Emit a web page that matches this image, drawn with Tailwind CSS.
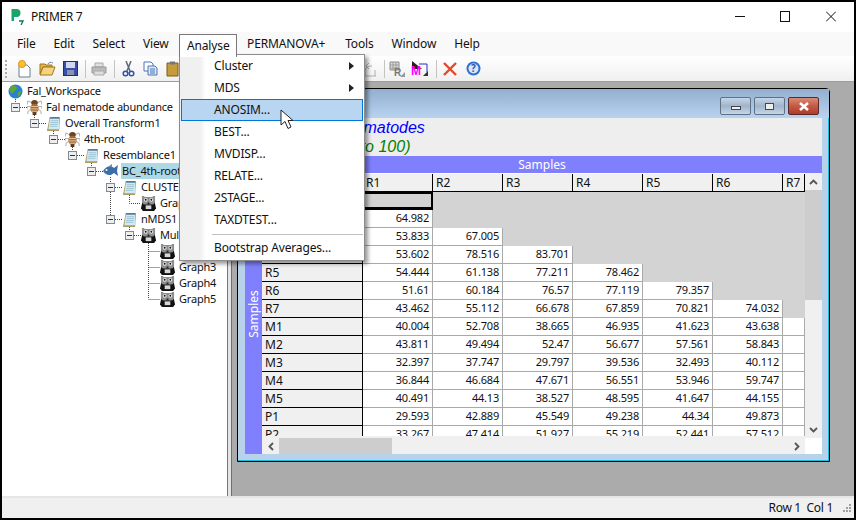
<!DOCTYPE html>
<html lang="en">

<head>
    <meta charset="UTF-8">
    <title>PRIMER 7</title>
    <script src="https://cdn.jsdelivr.net/npm/@tailwindcss/browser@4"></script>
</head>

<body class="bg-black overflow-hidden">
    <!-- shared tree icons -->
    <svg width="0" height="0" class="absolute">
        <symbol id="bug" viewBox="0 0 16 16">
            <path d="M5 3 1 1 0 5M4 7H0v3M4 10l-3 2v3M11 3l4-2 1 4M12 7h4v3M12 10l3 2v3" stroke="#a8a8a8" fill="none"/>
            <ellipse cx="8" cy="3" rx="3.500" ry="3" fill="#6e4420"/>
            <ellipse cx="8" cy="9" rx="4.500" ry="5" fill="#a5683a"/>
            <path d="M4 7h8M3.500 9.500h9M4.500 12h7" stroke="#e8cfa0"/>
            <rect x="6" y="13" width="4" height="3" fill="#5a3a1c"/>
        </symbol>
        <symbol id="note" viewBox="0 0 16 16">
            <path d="M4 1h11l-1 15H1z" fill="#b39a62"/>
            <path d="M4.500 1H14v13H2.500z" fill="#cfeaf2"/>
            <path d="M4.500 1H14v2H4z" fill="#5c7a96"/>
            <path d="M5 5h8M5 7h8M4.500 9h8M4 11h8" stroke="#9cc4d4"/>
        </symbol>
        <symbol id="owl" viewBox="0 0 16 16">
            <path d="M1.500 6 0 13l2 3h12l2-3-1.500-7z" fill="#111"/>
            <path d="M1 0h2l1 1h8l1-1h2v7l-2 2H3L1 7z" fill="#8e8e8e"/>
            <circle cx="5" cy="4" r="2" fill="#eee"/>
            <circle cx="11" cy="4" r="2" fill="#eee"/>
            <circle cx="5" cy="4" r="1" fill="#111"/>
            <circle cx="11" cy="4" r="1" fill="#111"/>
            <path d="M5 10h6v4H5z" fill="#d8d8d8"/>
            <path d="M7 7h2v2H7z" fill="#222"/>
        </symbol>
    </svg>

    <div class="relative w-[852px] h-[516px] m-[2px] flex flex-col font-['Noto_Sans',sans-serif] text-[12px] text-[#111] bg-white">
        <!-- Title bar -->
        <div class="h-[30px] shrink-0 flex items-center pl-[8px] bg-white">
            <svg width="14" height="17" viewBox="0 0 14 17" class="mr-[7px] -mt-[2px]">
                <path d="M1.500 1h5c3 0 4 2 4 4s-1 4-4 4H4v4H1.500z" fill="#16a56b"/>
                <path d="M9 13h4l-2 4" stroke="#16735a" stroke-width="1.300" fill="none"/>
            </svg>
            <span class="tracking-[-0.3px] -mt-[1px]">PRIMER 7</span>
            <div class="ml-auto flex items-center mb-[1px]">
                <svg width="10" height="11" viewBox="0 0 10 11" class="mr-[35px]"><path d="M0 5.500h10" stroke="#111"/></svg>
                <svg width="10" height="11" viewBox="0 0 10 11" class="mr-[36px]"><rect x=".5" y=".5" width="9" height="10" fill="none" stroke="#111"/></svg>
                <svg width="10" height="11" viewBox="0 0 10 11" class="mr-[18px]"><path d="M0 .5l10 10M10 .5 0 10.500" stroke="#111"/></svg>
            </div>
        </div>

        <!-- Menu bar -->
        <div class="h-[24px] shrink-0 flex items-center bg-[#f9f9f9] pl-[6px] tracking-[-0.15px]">
            <span class="px-[9px]">File</span>
            <span class="px-[9px]">Edit</span>
            <span class="px-[9px]">Select</span>
            <span class="px-[9px]">View</span>
            <span class="px-[9px]">Analyse</span>
            <span class="px-[9px]">PERMANOVA+</span>
            <span class="px-[9px] ml-[2px]">Tools</span>
            <span class="px-[9px]">Window</span>
            <span class="px-[9px]">Help</span>
        </div>

        <!-- Toolbar -->
        <div class="h-[26px] shrink-0 flex items-center bg-gradient-to-b from-white to-[#f0f0f0] border-b border-[#9c9c9c]">
            <div class="w-[2px] h-[18px] ml-[3px] mr-[9px] border-l-2 border-dotted border-[#aaa]"></div>
            <svg width="16" height="18" viewBox="0 0 16 18" class="mr-[7px]">
                <path d="M3 5h8l3 3v9H3z" fill="#fff" stroke="#6a7f96"/>
                <circle cx="6" cy="4" r="3.500" fill="#f7c52b" stroke="#ec8a1a"/>
            </svg>
            <svg width="17" height="15" viewBox="0 0 17 15" class="mr-[7px]">
                <path d="M1 3h5l1 1h6v2H4L1 13z" fill="#e2b548" stroke="#a0781e"/>
                <path d="M4 6h12l-3 8H1z" fill="#f6d47e" stroke="#a0781e"/>
                <path d="M9 3c1-2 3-2 5-1" stroke="#6f8aa8" fill="none"/>
            </svg>
            <svg width="15" height="15" viewBox="0 0 15 15" class="mr-[7px]">
                <rect x=".5" y=".5" width="14" height="14" fill="#3a4ea8" stroke="#222e70"/>
                <rect x="3" y="1" width="9" height="6" fill="#cfd8ee"/>
                <rect x="4" y="9" width="7" height="5" fill="#8b93b0"/>
            </svg>
            <div class="w-px h-[18px] bg-[#c4c4c4] mr-[5px]"></div>
            <svg width="16" height="14" viewBox="0 0 16 14" class="mr-[7px]">
                <path d="M4 1h8v4H4z" fill="#e0e0e0" stroke="#aaa"/>
                <path d="M1 5h14v6H1z" fill="#bbb" stroke="#999"/>
                <path d="M3 9h10v4H3z" fill="#ddd" stroke="#aaa"/>
            </svg>
            <div class="w-px h-[18px] bg-[#c4c4c4] mr-[7px]"></div>
            <svg width="13" height="16" viewBox="0 0 13 16" class="mr-[8px]">
                <path d="M4 0l4 10M9 0 5 10" stroke="#5a6a7a" stroke-width="1.500"/>
                <circle cx="3.500" cy="12.500" r="2.300" fill="none" stroke="#2d55a6" stroke-width="1.500"/>
                <circle cx="9.500" cy="12.500" r="2.300" fill="none" stroke="#2d55a6" stroke-width="1.500"/>
            </svg>
            <svg width="15" height="15" viewBox="0 0 15 15" class="mr-[8px]">
                <path d="M1 1h7l2 2v7H1z" fill="#fff" stroke="#4a76b8"/>
                <path d="M5 5h7l2 2v7H5z" fill="#dbe8f8" stroke="#4a76b8"/>
                <path d="M7 8h5M7 10h5M7 12h5" stroke="#4a76b8"/>
            </svg>
            <svg width="15" height="16" viewBox="0 0 15 16" class="mr-[181px]">
                <path d="M1 2h11v13H1z" fill="#c79a3a" stroke="#7a5c1c"/>
                <rect x="4" y="0.500" width="5" height="3" fill="#777"/>
            </svg>
            <svg width="16" height="16" viewBox="0 0 16 16" class="mr-[6px]">
                <path d="M3 15v-5c0-3 3-5 7-5M13 15V9M2 15h12M7 2 4 5l3 3" fill="none" stroke="#b0b0b0"/>
            </svg>
            <div class="w-px h-[18px] bg-[#c4c4c4] mr-[4px]"></div>
            <svg width="17" height="16" viewBox="0 0 17 16" class="mr-[5px] overflow-visible">
                <path d="M1 1h9v8H1z" fill="#dcdcdc" stroke="#8a8a8a"/>
                <path d="M1 4h9M1 7h9M4 1v8M7 1v8" stroke="#9a9a9a"/>
                <text x="5" y="15" font-size="10" font-weight="700" font-family="Liberation Sans" fill="#777">R</text>
                <path d="M16 16h-5l5-5z" fill="#999"/>
            </svg>
            <svg width="18" height="17" viewBox="0 0 18 17" class="mr-[7px] overflow-visible">
                <path d="M1 1l10 8H1z" fill="#222"/>
                <text x="0" y="15" font-size="12" font-weight="700" font-family="Liberation Sans" fill="#f0f">M</text>
                <path d="M8 4h8v8" fill="none" stroke="#2030c0"/>
                <path d="M12 16l5-5v5z" fill="#333"/>
            </svg>
            <div class="w-px h-[18px] bg-[#c4c4c4] mr-[6px]"></div>
            <svg width="14" height="14" viewBox="0 0 14 14" class="mr-[9px]"><path d="M1 1l12 12M13 1 1 13" stroke="#e2482a" stroke-width="2.400"/></svg>
            <svg width="15" height="15" viewBox="0 0 15 15">
                <circle cx="7.500" cy="7.500" r="7" fill="#2f6fd0"/>
                <circle cx="7.500" cy="7.500" r="5" fill="#dbe8fa"/>
                <text x="7.500" y="11" text-anchor="middle" font-size="10" font-weight="700" fill="#2458b0">?</text>
            </svg>
        </div>

        <!-- Main area -->
        <div class="relative flex-1 flex min-h-0">
            <!-- Workspace tree -->
            <div class="relative w-[226px] shrink-0 bg-white border-r border-[#777] pt-[1px] overflow-hidden text-[11px] tracking-[-0.2px]">
                <svg class="absolute inset-0 w-[226px] h-[260px]" fill="none">
                    <g transform="translate(-2,-82)">
                        <path d="M15.500 99v4M20 107.500h7M34.500 113v6M39 123.500h7M53.500 129v6M58 139.500h7M72.500 145v6M77 155.500h7M91.500 161v6M96 171.500h7M110.500 177v6M115 187.500h7M129.500 195v8.500h11M110.500 192v23M115 219.500h7M134 235.500h7M129.500 227v4M148.500 243v56M148.500 251.500h12M148.500 267.500h12M148.500 283.500h12M148.500 299.500h12" stroke="#444" stroke-dasharray="1 1"/>
                        <g fill="#eee" stroke="#808a94">
                            <rect x="11.500" y="103.500" width="8" height="8"/>
                            <rect x="30.500" y="119.500" width="8" height="8"/>
                            <rect x="49.500" y="135.500" width="8" height="8"/>
                            <rect x="68.500" y="151.500" width="8" height="8"/>
                            <rect x="87.500" y="167.500" width="8" height="8"/>
                            <rect x="106.500" y="183.500" width="8" height="8"/>
                            <rect x="106.500" y="215.500" width="8" height="8"/>
                            <rect x="125.500" y="231.500" width="8" height="8"/>
                        </g>
                        <path d="M13 107.500h5M32 123.500h5M51 139.500h5M70 155.500h5M89 171.500h5M108 187.500h5M108 219.500h5M127 235.500h5" stroke="#333"/>
                    </g>
                </svg>
                <div class="relative flex flex-col">
                    <div class="h-[16px] flex items-center pl-[6px] gap-[4px]">
                        <svg width="15" height="15" viewBox="0 0 15 15">
                            <circle cx="7.500" cy="7.500" r="7" fill="#2a7fd8"/>
                            <path d="M3 2c3-1 6 0 6 2S6 7 5 9 2 8 1.500 6zM10 8l3-1c0 3-1 5-3 6z" fill="#5aa83a"/>
                        </svg>
                        <span>Fal_Workspace</span>
                    </div>
                    <div class="h-[16px] flex items-center pl-[25px] gap-[4px]"><svg width="15" height="15"><use href="#bug"/></svg><span>Fal nematode abundance</span></div>
                    <div class="h-[16px] flex items-center pl-[44px] gap-[4px]"><svg width="15" height="15"><use href="#note"/></svg><span>Overall Transform1</span></div>
                    <div class="h-[16px] flex items-center pl-[63px] gap-[4px]"><svg width="15" height="15"><use href="#bug"/></svg><span>4th-root</span></div>
                    <div class="h-[16px] flex items-center pl-[82px] gap-[4px]"><svg width="15" height="15"><use href="#note"/></svg><span>Resemblance1</span></div>
                    <div class="h-[16px] flex items-center pl-[100px] gap-[2px]">
                        <svg width="17" height="14" viewBox="0 0 17 14">
                            <path d="M1 7c3-5 8-6 11-3l4-3-1 6 1 5-4-3c-3 3-8 3-11-2z" fill="#3c6ea8"/>
                            <circle cx="4.500" cy="6" r="1" fill="#fff"/>
                            <path d="M7 2l3-2v3z" fill="#6d8aa8"/>
                        </svg>
                        <span class="w-[70px] h-[16px] leading-[16px] bg-[#add8e6] px-[1px]">BC_4th-root</span>
                    </div>
                    <div class="h-[16px] flex items-center pl-[120px] gap-[4px]"><svg width="15" height="15"><use href="#note"/></svg><span>CLUSTER1</span></div>
                    <div class="h-[16px] flex items-center pl-[139px] gap-[4px]"><svg width="15" height="15"><use href="#owl"/></svg><span>Graph1</span></div>
                    <div class="h-[16px] flex items-center pl-[120px] gap-[4px]"><svg width="15" height="15"><use href="#note"/></svg><span>nMDS1</span></div>
                    <div class="h-[16px] flex items-center pl-[139px] gap-[4px]"><svg width="15" height="15"><use href="#owl"/></svg><span>Multi</span></div>
                    <div class="h-[16px] flex items-center pl-[158px] gap-[4px]"><svg width="15" height="15"><use href="#owl"/></svg><span>Graph2</span></div>
                    <div class="h-[16px] flex items-center pl-[158px] gap-[4px]"><svg width="15" height="15"><use href="#owl"/></svg><span>Graph3</span></div>
                    <div class="h-[16px] flex items-center pl-[158px] gap-[4px]"><svg width="15" height="15"><use href="#owl"/></svg><span>Graph4</span></div>
                    <div class="h-[16px] flex items-center pl-[158px] gap-[4px]"><svg width="15" height="15"><use href="#owl"/></svg><span>Graph5</span></div>
                </div>
            </div>
            <!-- Splitter -->
            <div class="w-[3px] shrink-0 bg-[#e4e4e4]"></div>

            <!-- MDI desktop -->
            <div class="relative flex-1 bg-[#ababab] border-l border-[#6f6f6f]">
                <!-- Child window -->
                <div class="absolute left-[5px] top-[6px] w-[593px] h-[374px] flex flex-col bg-[#b9d2ec] border border-black rounded-tr-[4px] shadow-[inset_-1px_-1px_0_#18c0e0]">
                    <div class="h-[29px] shrink-0 flex justify-end items-start gap-[3px] pt-[8px] pr-[10px] bg-gradient-to-b from-[#93afcf] to-[#b9d3ef]">
                        <div class="w-[31px] h-[18px] flex items-center justify-center rounded-[2px] border border-[#5f7184] bg-gradient-to-b from-[#c6d6e8] via-[#a0b4ca] to-[#c6d6e8]"><div class="w-[10px] h-[4px] mt-[3px] bg-[#eee] border border-[#445]"></div></div>
                        <div class="w-[31px] h-[18px] flex items-center justify-center rounded-[2px] border border-[#5f7184] bg-gradient-to-b from-[#c6d6e8] via-[#a0b4ca] to-[#c6d6e8]"><div class="w-[9px] h-[7px] bg-[#eee] border border-[#445]"></div></div>
                        <div class="w-[31px] h-[18px] flex items-center justify-center rounded-[2px] border border-[#5a2a2a] bg-gradient-to-b from-[#d88a78] via-[#c45a42] to-[#b03a2c]">
                            <svg width="12" height="9" viewBox="0 0 12 9"><path d="M2 1l8 7M10 1 2 8" stroke="#fff" stroke-width="2.600"/></svg>
                        </div>
                    </div>
                    <div class="flex-1 min-h-0 mx-[7px] mb-[7px] flex flex-col bg-[#f0f0f0]">
                        <!-- Matrix heading -->
                        <div class="h-[38px] shrink-0 font-['Liberation_Sans',sans-serif] italic text-[16px] leading-[19px] bg-[#eeeeee]">
                            <div class="pl-[74px] text-[#0000ff]">Fal nematodes</div>
                            <div class="pl-[97px] text-[#008000]">(0 to 100)</div>
                        </div>
                        <div class="h-[17px] shrink-0 pl-[17px] flex items-center justify-center bg-[#8080ff] text-white leading-none">Samples</div>
                        <div class="flex-1 min-h-0 flex">
                            <div class="w-[17px] shrink-0 flex items-center justify-center bg-[#8080ff] text-white">
                                <span class="-rotate-90 whitespace-nowrap">Samples</span>
                            </div>
                            <div class="flex-1 min-w-0 flex flex-col">
                                <div class="flex-1 min-h-0 flex">
                                    <div id="matrix" class="w-[543px] h-[263px] pt-[1px] overflow-hidden grid grid-cols-[101px_repeat(6,70px)_22px] auto-rows-[18px] bg-white"></div>
                                    <!-- Vertical scrollbar -->
                                    <div class="flex-1 flex flex-col bg-[#f0f0f0]">
                                        <div class="h-[17px] flex items-center justify-center">
                                            <svg width="9" height="6" viewBox="0 0 9 6"><path d="M1 5l3.500-3.500L8 5" fill="none" stroke="#555" stroke-width="1.800"/></svg>
                                        </div>
                                        <div class="h-[110px] bg-[#cdcdcd]"></div>
                                        <div class="flex-1"></div>
                                        <div class="h-[17px] flex items-center justify-center">
                                            <svg width="9" height="6" viewBox="0 0 9 6"><path d="M1 1l3.500 3.500L8 1" fill="none" stroke="#555" stroke-width="1.800"/></svg>
                                        </div>
                                    </div>
                                </div>
                                <!-- Horizontal scrollbar -->
                                <div class="h-[16px] shrink-0 flex bg-[#f0f0f0]">
                                    <div class="w-[17px] flex items-center justify-center">
                                        <svg width="6" height="9" viewBox="0 0 6 9"><path d="M5 1 1.500 4.500 5 8" fill="none" stroke="#555" stroke-width="1.800"/></svg>
                                    </div>
                                    <div class="w-[113px] bg-[#cdcdcd]"></div>
                                    <div class="flex-1 flex items-center justify-end pr-[5px]">
                                        <svg width="6" height="9" viewBox="0 0 6 9"><path d="M1 1l3.500 3.500L1 8" fill="none" stroke="#555" stroke-width="1.800"/></svg>
                                    </div>
                                    <div class="w-[17px] bg-white"></div>
                                </div>
                            </div>
                        </div>
                    </div>
                </div>
            </div>
        </div>

        <!-- Status bar -->
        <div class="h-[22px] shrink-0 flex items-center justify-end pr-[2px] bg-[#f0f0f0] border-t-2 border-[#e6e6e6] shadow-[0_-1px_0_#fff]">
            <span class="mr-[9px] tracking-[-0.3px]">Row 1&nbsp;&nbsp;Col 1</span>
            <svg width="10" height="10" viewBox="0 0 10 10" fill="#a0a0a0">
                <rect x="7" y="1" width="2" height="2"/><rect x="4" y="4" width="2" height="2"/><rect x="7" y="4" width="2" height="2"/>
                <rect x="1" y="7" width="2" height="2"/><rect x="4" y="7" width="2" height="2"/><rect x="7" y="7" width="2" height="2"/>
            </svg>
        </div>

        <!-- Open Analyse menu -->
        <div class="absolute left-[177px] top-[32px] w-[58px] h-[23px] z-20 flex items-center pl-[7px] tracking-[-0.15px] bg-white border border-b-0 border-[#7a7a7a]">Analyse</div>
        <div class="absolute left-[177px] top-[52px] w-[186px] h-[207px] z-10 flex flex-col tracking-[-0.15px] bg-white border border-[#8c8c8c] shadow-[3px_3px_4px_rgba(0,0,0,0.4)] bg-gradient-to-r from-[#f0f0f0] from-[11%] to-white to-[14%]">
            <div class="h-[22px] flex items-center pl-[34px] pr-[10px] justify-between">Cluster<svg width="5" height="8" viewBox="0 0 5 8"><path d="M0 0l5 4-5 4z" fill="#222"/></svg></div>
            <div class="h-[22px] flex items-center pl-[34px] pr-[10px] justify-between">MDS<svg width="5" height="8" viewBox="0 0 5 8"><path d="M0 0l5 4-5 4z" fill="#222"/></svg></div>
            <div class="h-[22px] mx-[1px] flex items-center pl-[32px] bg-[#b8d6f2] border border-[#0078d7]">ANOSIM...</div>
            <div class="h-[22px] flex items-center pl-[34px]">BEST...</div>
            <div class="h-[22px] flex items-center pl-[34px]">MVDISP...</div>
            <div class="h-[22px] flex items-center pl-[34px]">RELATE...</div>
            <div class="h-[22px] flex items-center pl-[34px]">2STAGE...</div>
            <div class="h-[22px] flex items-center pl-[34px]">TAXDTEST...</div>
            <div class="h-px ml-[32px] mr-[1px] mt-[3px] mb-[2px] bg-[#c0c0c0]"></div>
            <div class="h-[22px] flex items-center pl-[34px]">Bootstrap Averages...</div>
        </div>

        <!-- Mouse pointer -->
        <svg width="14" height="21" viewBox="0 0 14 21" class="absolute left-[278px] top-[107px] z-30">
            <path d="M1 1v15l4-3.500 3 7 3-1.500-3-6.500h5z" fill="#fff" stroke="#222"/>
        </svg>
    </div>

    <script>
        // lower triangle of the resemblance matrix
        const labels = ['R1', 'R2', 'R3', 'R4', 'R5', 'R6', 'R7', 'M1', 'M2', 'M3', 'M4', 'M5', 'P1', 'P2'];
        const values = [
            [],
            ['64.982'],
            ['53.833', '67.005'],
            ['53.602', '78.516', '83.701'],
            ['54.444', '61.138', '77.211', '78.462'],
            ['51.61', '60.184', '76.57', '77.119', '79.357'],
            ['43.462', '55.112', '66.678', '67.859', '70.821', '74.032'],
            ['40.004', '52.708', '38.665', '46.935', '41.623', '43.638', ''],
            ['43.811', '49.494', '52.47', '56.677', '57.561', '58.843', ''],
            ['32.397', '37.747', '29.797', '39.536', '32.493', '40.112', ''],
            ['36.844', '46.684', '47.671', '56.551', '53.946', '59.747', ''],
            ['40.491', '44.13', '38.527', '48.595', '41.647', '44.155', ''],
            ['29.593', '42.889', '45.549', '49.238', '44.34', '49.873', ''],
            ['33.267', '47.414', '51.927', '55.219', '52.441', '57.512', '']
        ];
        const headClass = 'flex items-center pl-[3px] bg-[#f0f0f0] border-r border-b border-black';
        const cellClass = 'flex items-center justify-end pr-[3px] bg-white border-r border-b border-[#a9a9a9] text-[11px] tracking-[-0.2px]';
        const blankClass = 'bg-[#d3d3d3]';
        const markClass = 'bg-[#d3d3d3] border-2 border-b-[3px] border-black';
        let html = '<div class="' + headClass + '"></div>';
        labels.slice(0, 7).forEach(l => { html += '<div class="' + headClass + '">' + l + '</div>'; });
        labels.forEach((l, r) => {
            html += '<div class="' + headClass + '">' + l + '</div>';
            for (let c = 0; c < 7; c++) {
                if (r === 0 && c === 0) html += '<div class="' + markClass + '"></div>';
                else if (c < values[r].length) html += '<div class="' + cellClass + '">' + values[r][c] + '</div>';
                else html += '<div class="' + blankClass + '"></div>';
            }
        });
        document.getElementById('matrix').innerHTML = html;
    </script>
</body>

</html>
